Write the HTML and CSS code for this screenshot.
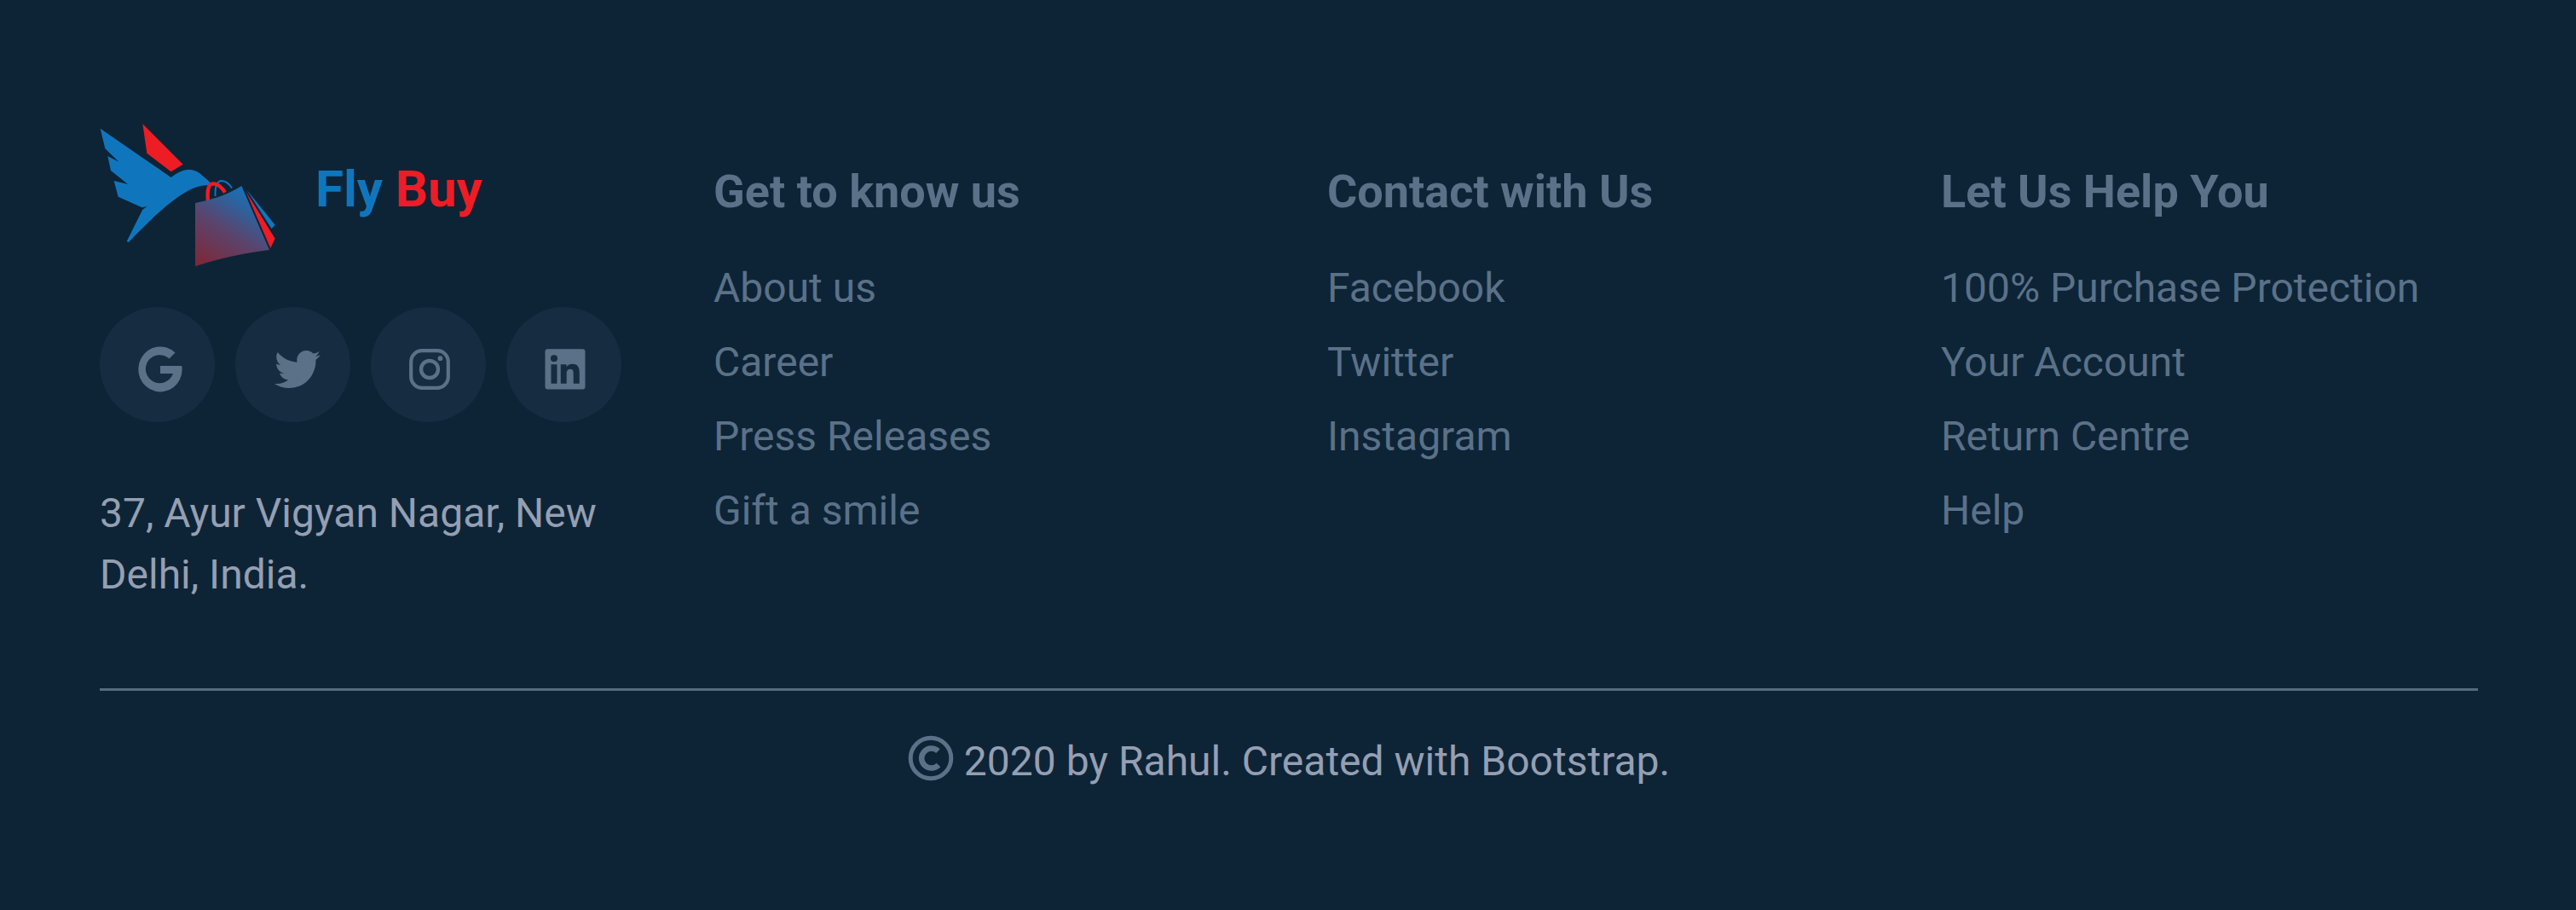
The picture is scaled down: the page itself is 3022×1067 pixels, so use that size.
FILE: index.html
```html
<!DOCTYPE html>
<html lang="en">
<head>
<meta charset="utf-8">
<title>Fly Buy</title>
<link rel="stylesheet" href="styles.css">
</head>
<body>
<footer class="footer">
  <div class="columns">
    <section class="brand-col">
      <a class="brand">
        <svg class="brand-logo" viewBox="0 0 720 600" aria-hidden="true">
          <defs>
            <linearGradient id="bag" gradientUnits="userSpaceOnUse" x1="580" y1="275" x2="400" y2="560">
              <stop offset="0" stop-color="#0f76bf"/>
              <stop offset="0.5" stop-color="#5a446c"/>
              <stop offset="1" stop-color="#832433"/>
            </linearGradient>
          </defs>
          <path fill="#0f76be" d="M53 62 L302 234 Q335 207 365 206 Q395 207 415 230 Q428 240 440 252 L434 262 C360 255 250 360 153 462 L146 459 L202 347 L218 336 L200 340 L116 302 L101 246 L150 258 L90 210 L79 159 L118 179 L70 133 Z"/>
          <path fill="#ee1c25" d="M202 46 L344 188 L302 214 L217 149 Z"/>
          <path fill="none" stroke="#0f76be" stroke-width="6" d="M458 300 Q455 248 480 246 Q500 247 516 271"/>
          <path fill="none" stroke="#ee1c25" stroke-width="13" d="M432 317 Q426 257 450 256 Q472 256 492 287"/>
          <path fill="url(#bag)" d="M387 324 Q480 308 550 264 L648 489 Q500 508 387 547 Z"/>
          <path fill="#ee1c25" d="M564 281 L668 449 L652 483 Z"/>
          <path fill="#0f76be" d="M567 276 L668 401 L656 415 Z"/>
        </svg>
        <span class="brand-name"><span class="fly">Fly</span> <span class="buy">Buy</span></span>
      </a>
      <div class="social">
        <a class="social-link"><svg viewBox="0 0 54 54" aria-hidden="true"><path d="M27 23H52.200Q52.700 25 52.700 27A25.700 26.500 0 1 1 44.500 7.500L37.500 14.500A16.500 16.500 0 1 0 42 32H27Z"/></svg></a>
        <a class="social-link twitter"><svg viewBox="0 0 512 512" aria-hidden="true"><path d="M459.370 151.716c.325 4.548.325 9.097.325 13.645 0 138.720-105.583 298.558-298.558 298.558-59.452 0-114.680-17.219-161.137-47.106 8.447.974 16.568 1.299 25.340 1.299 49.055 0 94.213-16.568 130.274-44.832-46.132-.975-84.792-31.188-98.112-72.772 6.498.974 12.995 1.624 19.818 1.624 9.421 0 18.843-1.300 27.614-3.573-48.081-9.747-84.143-51.980-84.143-102.985v-1.299c13.969 7.797 30.214 12.670 47.431 13.319-28.264-18.843-46.781-51.005-46.781-87.391 0-19.492 5.197-37.360 14.294-52.954 51.655 63.675 129.300 105.258 216.365 109.807-1.624-7.797-2.599-15.918-2.599-24.040 0-57.828 46.782-104.934 104.934-104.934 30.213 0 57.502 12.670 76.670 33.137 23.715-4.548 46.456-13.320 66.599-25.340-7.798 24.366-24.366 44.833-46.132 57.827 21.117-2.273 41.584-8.122 60.426-16.243-14.292 20.791-32.161 39.308-52.628 54.253z"/></svg></a>
        <a class="social-link square"><svg viewBox="0 0 54 54" aria-hidden="true"><rect x="5.200" y="5.200" width="43.600" height="43.600" rx="13" fill="none" stroke="#5b7188" stroke-width="4.200"/><circle cx="27" cy="27" r="10" fill="none" stroke="#5b7188" stroke-width="4.400"/><circle cx="39.500" cy="14.200" r="2.900"/></svg></a>
        <a class="social-link square"><svg viewBox="0 0 54 54" aria-hidden="true"><path fill-rule="evenodd" d="M6.500 3.300H47.500Q50.500 3.300 50.500 6.300V47.500Q50.500 50.500 47.500 50.500H6.500Q3.500 50.500 3.500 47.500V6.300Q3.500 3.300 6.500 3.300ZM10.500 21.300V43.700H17.500V21.300ZM14 10.200A4 4 0 1 0 14 18.300A4 4 0 1 0 14 10.200ZM21.800 21.300V43.700H28.700V32.500C28.700 29.500 29.300 26.700 33 26.700S36.700 30 36.700 32.800V43.700H43.800V31.300C43.800 25.500 42.500 20.700 35.500 20.700Q30.500 20.700 28.500 24.300V21.300Z"/></svg></a>
      </div>
      <p class="address">37, Ayur Vigyan Nagar, New Delhi, India.</p>
    </section>
    <section class="link-col">
      <h2>Get to know us</h2>
      <ul><li>About us</li><li>Career</li><li>Press Releases</li><li>Gift a smile</li></ul>
    </section>
    <section class="link-col">
      <h2>Contact with Us</h2>
      <ul><li>Facebook</li><li>Twitter</li><li>Instagram</li></ul>
    </section>
    <section class="link-col">
      <h2>Let Us Help You</h2>
      <ul><li>100% Purchase Protection</li><li>Your Account</li><li>Return Centre</li><li>Help</li></ul>
    </section>
  </div>
  <div class="copyright">
    <svg class="copy-icon" viewBox="0 0 54 54" aria-hidden="true"><circle cx="27" cy="27" r="23.800" fill="none" stroke="#5b7188" stroke-width="5"/><path fill="none" stroke="#5b7188" stroke-width="6.500" d="M35.500 18.700A11.500 11.500 0 1 0 36 35"/></svg>
    <span>2020 by Rahul. Created with Bootstrap.</span>
  </div>
</footer>
</body>
</html>
```
FILE: styles.css
```css
* { box-sizing: border-box; }

body {
  margin: 0;
  background: #0d2436;
  font-family: Roboto, "Liberation Sans", sans-serif;
  font-size: 48px;
  line-height: 72px;
  color: #959fb2;
}

.footer {
  height: 1067px;
  padding: 130px 115px 0 117px;
}

.columns {
  display: grid;
  grid-template-columns: repeat(4, 720px);
  height: 677px;
  width: 2790px;
}

.brand {
  display: flex;
  height: 200px;
  margin-left: -17px;
}

.brand-logo {
  width: 240px;
  height: 200px;
}

.brand-name {
  margin: 54px 0 0 30px;
  font-size: 60px;
  font-weight: 700;
  line-height: 75px;
}

.fly { color: #0f76be; }
.buy { color: #ee1c25; }

.social {
  display: flex;
  gap: 24px;
  margin-top: 30px;
}

.social-link {
  flex: none;
  width: 135px;
  height: 135px;
  padding: 46px 0 0 44px;
  border-radius: 50%;
  background: #162c40;
}

.social-link.twitter { padding-left: 46px; }
.social-link.square { padding-left: 42px; }

.social-link svg {
  display: block;
  width: 54px;
  height: 54px;
  fill: #5b7188;
}

.address {
  width: 630px;
  margin: 71px 0 0;
}

.link-col {
  padding-top: 61px;
  color: #5b7188;
}

.link-col h2 {
  margin: 0 0 43px;
  font-size: 54px;
  font-weight: 700;
  line-height: 68px;
}

.link-col ul {
  display: grid;
  gap: 15px;
  margin: 0;
  padding: 0;
  list-style: none;
}

.copyright {
  display: flex;
  justify-content: center;
  gap: 12px;
  padding-top: 47px;
  border-top: 3px solid #536b7c;
}

.copy-icon {
  width: 54px;
  height: 54px;
  margin-top: 5px;
}
```
